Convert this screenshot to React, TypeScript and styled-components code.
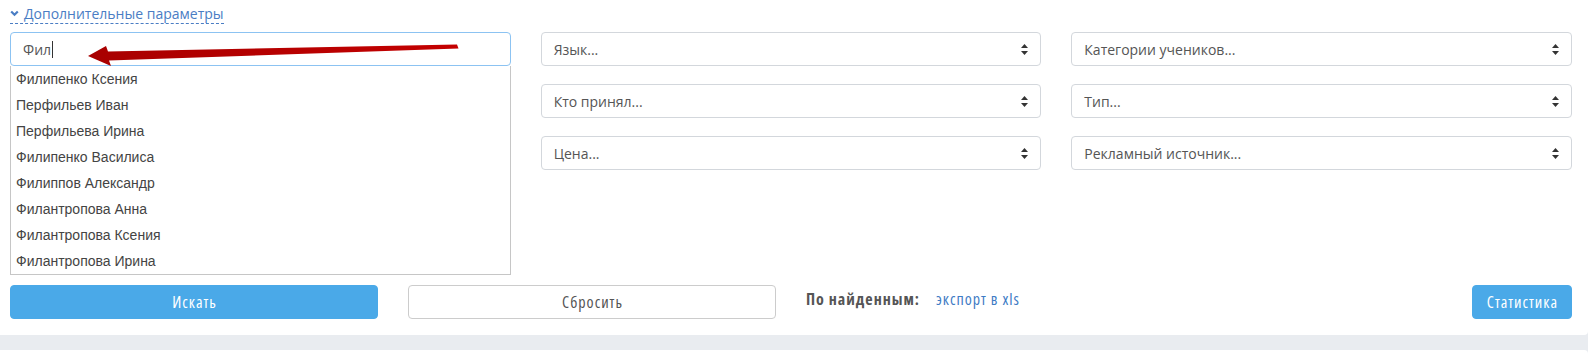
import React from "react";
import styled, { createGlobalStyle } from "styled-components";

const Global = createGlobalStyle`
  html, body { margin: 0; padding: 0; }
  body {
    background: #e9ecf0;
    font-family: "Open Sans", "Liberation Sans", sans-serif;
    -webkit-font-smoothing: antialiased;
  }
`;

const Page = styled.div`
  width: 1588px;
  display: flex;
  flex-direction: column;
  gap: 15px;
`;

const Panel = styled.section`
  position: relative;
  background: #fff;
  padding: 4px 16px 16px 10px;
  border-bottom-right-radius: 4px;
`;

const NextPanel = styled.div`
  height: 20px;
  background: #fff;
  border-top-right-radius: 4px;
`;

const ToggleRow = styled.div`
  display: flex;
`;

const Toggle = styled.a`
  display: inline-flex;
  align-items: center;
  gap: 5px;
  color: #4a7dc4;
  font-size: 14px;
  line-height: 19px;
  text-decoration: none;
  border-bottom: 1px dashed #4a7dc4;
  cursor: pointer;
`;

const FilterGrid = styled.div`
  display: grid;
  grid-template-columns: repeat(3, 1fr);
  column-gap: 30px;
  row-gap: 18px;
  margin-top: 8px;
`;

const SearchWrap = styled.div`
  position: relative;
  z-index: 2;
`;

const SearchInput = styled.div`
  height: 34px;
  box-sizing: border-box;
  border: 1px solid #8cc3f2;
  border-radius: 4px;
  display: flex;
  align-items: center;
  padding: 0 12px;
  font-size: 14px;
  color: #555;
`;

const Caret = styled.span`
  display: inline-block;
  width: 1px;
  height: 17px;
  background: #333;
  margin-left: 1px;
`;

const Suggestions = styled.ul`
  position: absolute;
  top: 100%;
  left: 0;
  right: 0;
  margin: 0;
  padding: 0;
  list-style: none;
  background: #fff;
  border: 1px solid #c6c6c6;
  border-top: none;
`;

const Suggestion = styled.li`
  height: 26px;
  line-height: 26px;
  padding-left: 5px;
  font-family: "Liberation Sans", Arial, sans-serif;
  font-size: 14px;
  color: #444;
`;

const Select = styled.div`
  height: 34px;
  box-sizing: border-box;
  border: 1px solid #d3d7dc;
  border-radius: 4px;
  display: flex;
  align-items: center;
  justify-content: space-between;
  padding: 0 12px 0 12px;
  font-size: 14px;
  color: #555;
`;

const ButtonsRow = styled.div`
  display: grid;
  grid-template-columns: repeat(4, 1fr);
  column-gap: 30px;
  margin-top: 115px;
  align-items: center;
`;

const Button = styled.button<{ $primary?: boolean }>`
  height: 34px;
  box-sizing: border-box;
  border-radius: 4px;
  border: 1px solid ${(p) => (p.$primary ? "#4aa9e8" : "#cccccc")};
  background: ${(p) => (p.$primary ? "#4aa9e8" : "#fff")};
  color: ${(p) => (p.$primary ? "#fff" : "#555")};
  font-family: "Open Sans", sans-serif;
  font-stretch: 75%;
  font-size: 16px;
  letter-spacing: 1px;
  padding: 0 13px 0 14px;
  cursor: pointer;
`;

const StatsCell = styled.div`
  display: flex;
  justify-content: flex-end;
`;

const ExportCell = styled.div`
  display: flex;
  align-items: center;
  gap: 16px;
  font-stretch: 75%;
  font-size: 16px;
  letter-spacing: 1px;
  margin-top: -6px;
`;

const ExportLabel = styled.span`
  font-weight: 700;
  color: #555;
`;

const ExportLink = styled.a`
  color: #3f7cc5;
  text-decoration: none;
`;

const Arrow = styled.svg`
  position: absolute;
  left: 0;
  top: 0;
  z-index: 3;
  pointer-events: none;
`;

const SortIcon = () => (
  <svg width="7" height="11" viewBox="0 0 7 11">
    <path d="M3.5 0 L7 4 L0 4 Z" fill="#333" />
    <path d="M3.5 11 L7 7 L0 7 Z" fill="#333" />
  </svg>
);

const names = [
  "Филипенко Ксения",
  "Перфильев Иван",
  "Перфильева Ирина",
  "Филипенко Василиса",
  "Филиппов Александр",
  "Филантропова Анна",
  "Филантропова Ксения",
  "Филантропова Ирина",
];

const col2 = ["Язык...", "Кто принял...", "Цена..."];
const col3 = ["Категории учеников...", "Тип...", "Рекламный источник..."];

export default function App() {
  return (
    <>
      <Global />
      <Page>
        <Panel>
          <ToggleRow>
            <Toggle>
              <svg width="9" height="7" viewBox="0 0 9 7">
                <path d="M1.2 1.5 L4.5 4.8 L7.8 1.5" fill="none" stroke="#4a7dc4" strokeWidth="2.2" />
              </svg>
              Дополнительные параметры
            </Toggle>
          </ToggleRow>
          <FilterGrid>
            <SearchWrap>
              <SearchInput>
                Фил<Caret />
              </SearchInput>
              <Suggestions>
                {names.map((n) => (
                  <Suggestion key={n}>{n}</Suggestion>
                ))}
              </Suggestions>
            </SearchWrap>
            <Select>
              {col2[0]}
              <SortIcon />
            </Select>
            <Select>
              {col3[0]}
              <SortIcon />
            </Select>
            <div />
            <Select>
              {col2[1]}
              <SortIcon />
            </Select>
            <Select>
              {col3[1]}
              <SortIcon />
            </Select>
            <div />
            <Select>
              {col2[2]}
              <SortIcon />
            </Select>
            <Select>
              {col3[2]}
              <SortIcon />
            </Select>
          </FilterGrid>
          <ButtonsRow>
            <Button $primary>Искать</Button>
            <Button>Сбросить</Button>
            <ExportCell>
              <ExportLabel>По найденным:</ExportLabel>
              <ExportLink>экспорт в xls</ExportLink>
            </ExportCell>
            <StatsCell>
              <Button $primary>Статистика</Button>
            </StatsCell>
          </ButtonsRow>
          <Arrow width="470" height="80" viewBox="0 0 470 80">
            <defs>
              <linearGradient id="ag" x1="0" y1="0" x2="1" y2="0">
                <stop offset="0" stopColor="#a80000" />
                <stop offset="1" stopColor="#c40000" />
              </linearGradient>
            </defs>
            <polygon
              points="88,56 106,46 108,51.5 457,44.5 458.5,48.5 109,60.5 111,66"
              fill="url(#ag)"
            />
          </Arrow>
        </Panel>
        <NextPanel />
      </Page>
    </>
  );
}
